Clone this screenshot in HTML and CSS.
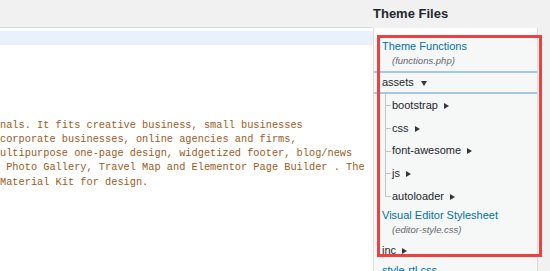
FILE: index.html
```html
<!DOCTYPE html>
<html lang="en">
<head>
  <meta charset="UTF-8">
  <meta name="viewport" content="width=device-width, initial-scale=1.0">
  <title>Edit Themes</title>
  <link rel="stylesheet" href="styles.css">
</head>
<body>
  <div class="page">

    <!-- Code editor -->
    <div class="editor">
      <div class="code">
        <div class="line active"></div>
        <div class="line"></div>
        <div class="line"></div>
        <div class="line"></div>
        <div class="line"></div>
        <div class="line"></div>
        <div class="text">
          <div class="line">nals. It fits creative business, small businesses</div>
          <div class="line">corporate businesses, online agencies and firms,</div>
          <div class="line">ultipurpose one-page design, widgetized footer, blog/news</div>
          <div class="line"> Photo Gallery, Travel Map and Elementor Page Builder . The</div>
          <div class="line">Material Kit for design.</div>
        </div>
      </div>
    </div>

    <!-- Theme files sidebar -->
    <aside class="sidebar">
      <h2>Theme Files</h2>
      <div class="files">
        <div class="file-prev"></div>
        <ul class="tree">
          <li class="file first">
            <a href="#">Theme Functions</a>
            <span class="path">(functions.php)</span>
          </li>
          <li class="folder">
            <span class="folder-name open">assets</span>
            <ul class="sub">
              <li><span class="closed">bootstrap</span></li>
              <li><span class="closed">css</span></li>
              <li><span class="closed">font-awesome</span></li>
              <li><span class="closed">js</span></li>
              <li><span class="closed">autoloader</span></li>
            </ul>
          </li>
          <li class="file second">
            <a href="#">Visual Editor Stylesheet</a>
            <span class="path">(editor-style.css)</span>
          </li>
          <li class="folder-row"><span class="closed">inc</span></li>
          <li class="file plain"><a href="#">style-rtl.css</a></li>
        </ul>
      </div>
      <div class="highlight"></div>
    </aside>

  </div>
</body>
</html>
```

FILE: styles.css
```css
body {
  margin: 0;
  background: #f1f1f1;
  font-family: "Liberation Sans", Arial, sans-serif;
  color: #23282d;
  overflow: hidden;
}

.page {
  display: flex;
  height: 271px;
}

/* editor */
.editor {
  width: 373px;
  flex-shrink: 0;
  margin-top: 27px;
  padding-top: 3px;
  border-top: 1px solid #dcdcdc;
  background: #fff;
}

.code {
  font-family: "Liberation Mono", "Courier New", monospace;
  font-size: 10.3px;
  color: #9e5a23;
  overflow: hidden;
}

.line {
  height: 14.17px;
  line-height: 14.17px;
  white-space: pre;
}

.line.active {
  background: #e8f1fd;
}

.text {
  margin-top: 2px;
}

/* sidebar */
.sidebar {
  position: relative;
  flex: 1;
}

.sidebar h2 {
  margin: 6px 0 6px;
  font-size: 13px;
  line-height: 16px;
  font-weight: bold;
  color: #23282d;
}

.files {
  height: 243px;
  margin-right: 12px;
  border-left: 1px solid #dcdcdc;
  border-right: 1px solid #dcdcdc;
  background: #f6f7f7;
  overflow: hidden;
  font-size: 11px;
}

.file-prev {
  height: 7px;
  background: #fff;
}

.tree, .sub {
  list-style: none;
  margin: 0;
  padding: 0;
}

.file {
  padding-left: 8px;
}

.file a {
  display: block;
  color: #0073aa;
  text-decoration: none;
  line-height: 13px;
}

.file .path {
  display: block;
  margin-top: 1px;
  padding-left: 10px;
  font-size: 9.5px;
  line-height: 14px;
  font-style: italic;
  color: #646970;
}

.file.first {
  padding-top: 5px;
  padding-bottom: 3px;
}

.file.second {
  padding-top: 1.5px;
  padding-bottom: 3.4px;
}

.file.plain a {
  line-height: 20px;
}

.folder-name {
  display: block;
  padding-left: 8px;
  line-height: 19px;
  border-top: 2px solid #a7c6e6;
  border-bottom: 2px solid #a7c6e6;
}

.open::after {
  content: "";
  display: inline-block;
  margin-left: 7px;
  border-top: 5px solid #32373c;
  border-left: 3.5px solid transparent;
  border-right: 3.5px solid transparent;
}

.closed::after {
  content: "";
  display: inline-block;
  margin-left: 6px;
  border-left: 5px solid #32373c;
  border-top: 3px solid transparent;
  border-bottom: 3px solid transparent;
}

.sub {
  margin-left: 11px;
}

.sub li {
  position: relative;
  padding-left: 7px;
  line-height: 22.7px;
}

.sub li::before {
  content: "";
  position: absolute;
  left: 0;
  top: 0;
  width: 5px;
  height: 50%;
  border-left: 1px solid #c3c4c7;
  border-bottom: 1px solid #c3c4c7;
}

.sub li:not(:last-child)::after {
  content: "";
  position: absolute;
  left: 0;
  top: 50%;
  bottom: 0;
  border-left: 1px solid #c3c4c7;
}

.folder-row {
  padding-left: 8px;
  line-height: 20px;
}

/* red annotation box */
.highlight {
  position: absolute;
  left: 4px;
  top: 35px;
  width: 165px;
  height: 222px;
  box-sizing: border-box;
  border: 3px solid #ee4040;
}
```
